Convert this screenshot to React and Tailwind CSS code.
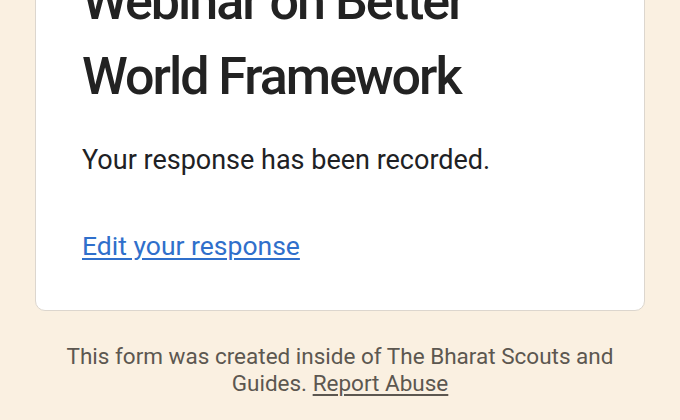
export default function App() {
  return (
    <div className="w-[680px] h-[420px] overflow-hidden bg-[#faf0e1]" style={{ fontFamily: 'Roboto, "Liberation Sans", sans-serif' }}>
      <div className="mt-[-77px] mx-[35px] bg-white border border-[#dcd6ce] rounded-[10px] px-[46px] pt-[40px] pb-[48px]">
        <h1 className="text-[52px] leading-[75px] text-[#222222] font-medium tracking-[-2px]">
          Webinar on Better
          <br />
          World Framework
        </h1>
        <p className="mt-[30px] text-[27px] leading-[32px] text-[#202124]">Your response has been recorded.</p>
        <a href="#" className="block w-fit mt-[54px] text-[26.5px] leading-[32px] text-[#2f6fcb] underline underline-offset-[3px]">
          Edit your response
        </a>
      </div>
      <div className="mt-[32px] px-[60px] text-center text-[22.5px] leading-[27px] text-[#5c5750]">
        This form was created inside of The Bharat Scouts and Guides.{' '}
        <a href="#" className="underline underline-offset-[3px]">Report Abuse</a>
      </div>
    </div>
  );
}
